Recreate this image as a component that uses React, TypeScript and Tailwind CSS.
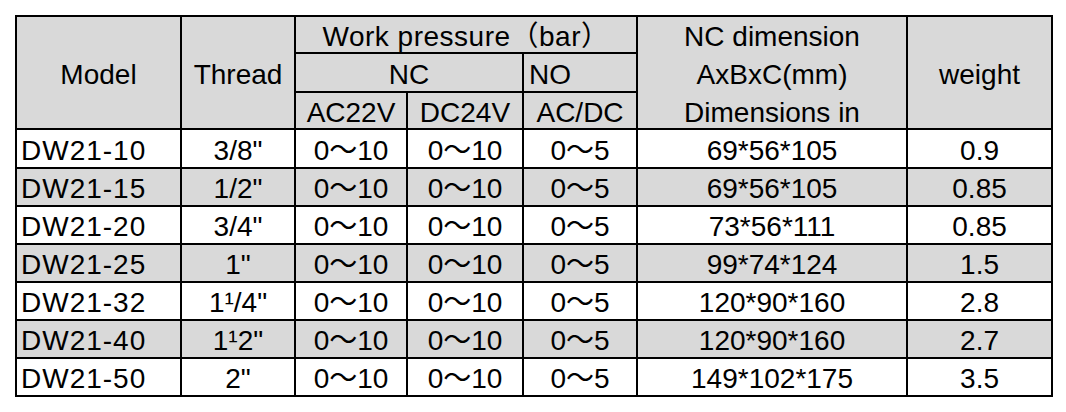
import React from "react";

const rows = [
  { model: "DW21-10", thread: '3/8"', ac: "0～10", dc: "0～10", no: "0～5", dim: "69*56*105", weight: "0.9" },
  { model: "DW21-15", thread: '1/2"', ac: "0～10", dc: "0～10", no: "0～5", dim: "69*56*105", weight: "0.85" },
  { model: "DW21-20", thread: '3/4"', ac: "0～10", dc: "0～10", no: "0～5", dim: "73*56*111", weight: "0.85" },
  { model: "DW21-25", thread: '1"', ac: "0～10", dc: "0～10", no: "0～5", dim: "99*74*124", weight: "1.5" },
  { model: "DW21-32", thread: '1¹/4"', ac: "0～10", dc: "0～10", no: "0～5", dim: "120*90*160", weight: "2.8" },
  { model: "DW21-40", thread: '1¹2"', ac: "0～10", dc: "0～10", no: "0～5", dim: "120*90*160", weight: "2.7" },
  { model: "DW21-50", thread: '2"', ac: "0～10", dc: "0～10", no: "0～5", dim: "149*102*175", weight: "3.5" },
];

// 2px grid lines, text nudged down a bit to sit like the source sheet
const cell = "border-2 border-black p-0 pt-[4px] leading-none whitespace-nowrap";

const App = () => {
  return (
    <div className="w-[1066px] h-[412px] bg-white pt-[15px] pl-[15px] font-['Liberation_Sans','Noto_Sans_CJK_SC',sans-serif] text-[28px] text-black">
      <table className="table-fixed border-collapse w-[1036px]">
        <colgroup>
          <col className="w-[165px]" />
          <col className="w-[114px]" />
          <col className="w-[112px]" />
          <col className="w-[116px]" />
          <col className="w-[114px]" />
          <col className="w-[270px]" />
          <col className="w-[145px]" />
        </colgroup>
        <thead className="bg-[#d9d9d9]">
          <tr className="h-[37px]">
            <th rowSpan={3} className={`${cell} font-normal text-center`}>
              Model
            </th>
            <th rowSpan={3} className={`${cell} font-normal text-center`}>
              Thread
            </th>
            <th colSpan={3} className={`${cell} font-normal text-center tracking-[0.5px]`}>
              Work pressure（bar）
            </th>
            <th rowSpan={3} className={`${cell} font-normal text-center`}>
              <div className="flex flex-col items-center gap-[10px]">
                <span>NC dimension</span>
                <span>AxBxC(mm)</span>
                <span>Dimensions in</span>
              </div>
            </th>
            <th rowSpan={3} className={`${cell} font-normal text-center`}>
              weight
            </th>
          </tr>
          <tr className="h-[39px]">
            <th colSpan={2} className={`${cell} font-normal text-center`}>
              NC
            </th>
            <th className={`${cell} font-normal text-left pl-[5px]`}>NO</th>
          </tr>
          <tr className="h-[37px]">
            <th className={`${cell} font-normal text-center`}>AC22V</th>
            <th className={`${cell} font-normal text-center`}>DC24V</th>
            <th className={`${cell} font-normal text-center`}>AC/DC</th>
          </tr>
        </thead>
        <tbody>
          {rows.map((r, i) => (
            <tr
              key={r.model}
              className={`${i === 0 ? "h-[39px]" : "h-[38px]"} ${
                i % 2 === 1 ? "bg-[#d9d9d9]" : "bg-white"
              }`}
            >
              <td className={`${cell} text-left pl-[4px] tracking-[1px]`}>{r.model}</td>
              <td className={`${cell} text-center`}>{r.thread}</td>
              <td className={`${cell} text-center`}>{r.ac}</td>
              <td className={`${cell} text-center`}>{r.dc}</td>
              <td className={`${cell} text-center`}>{r.no}</td>
              <td className={`${cell} text-center`}>{r.dim}</td>
              <td className={`${cell} text-center`}>{r.weight}</td>
            </tr>
          ))}
        </tbody>
      </table>
    </div>
  );
};

export default App;
